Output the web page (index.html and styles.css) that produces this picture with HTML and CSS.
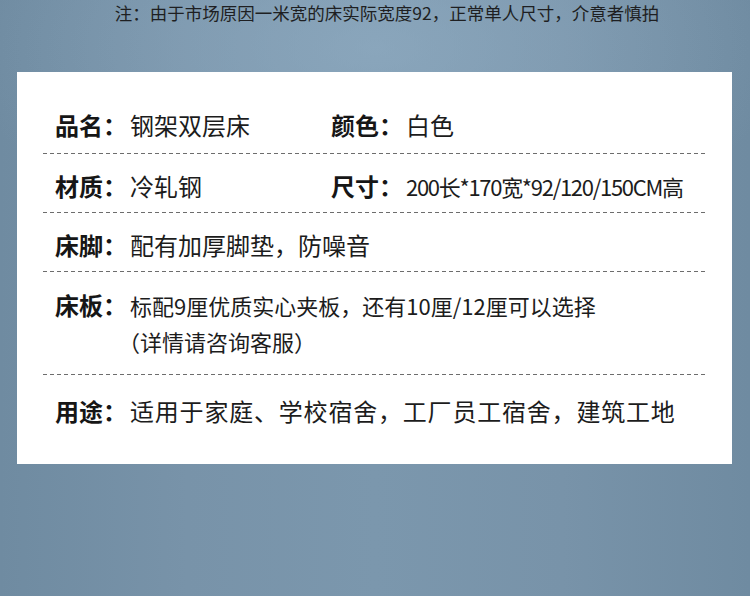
FILE: index.html
```html
<!DOCTYPE html>
<html lang="zh-CN">
  <head>
    <meta charset="UTF-8" />
    <meta name="viewport" content="width=device-width, initial-scale=1.0" />
    <title>钢架双层床 参数</title>
    <link rel="stylesheet" href="styles.css">
  </head>
  <body>
    <div class="page">
      <p class="note">注：由于市场原因一米宽的床实际宽度92，正常单人尺寸，介意者慎拍</p>

      <div class="card">
        <div class="row row-first row-pair">
          <div class="cell">
            <span class="label">品名：</span><span class="value">钢架双层床</span>
          </div>
          <div class="cell">
            <span class="label">颜色：</span><span class="value">白色</span>
          </div>
        </div>

        <div class="row row-pair">
          <div class="cell">
            <span class="label">材质：</span><span class="value">冷轧钢</span>
          </div>
          <div class="cell">
            <span class="label">尺寸：</span><span class="value value-size">200长*170宽*92/120/150CM高</span>
          </div>
        </div>

        <div class="row">
          <div class="cell">
            <span class="label">床脚：</span><span class="value">配有加厚脚垫，防噪音</span>
          </div>
        </div>

        <div class="row row-board">
          <div class="cell">
            <span class="label">床板：</span>
            <span class="value value-small">
              <span class="line">标配9厘优质实心夹板，还有10厘/12厘可以选择</span>
              <span class="line line-pull">（详情请咨询客服）</span>
            </span>
          </div>
        </div>

        <div class="row row-last">
          <div class="cell">
            <span class="label">用途：</span><span class="value value-wide">适用于家庭、学校宿舍，工厂员工宿舍，建筑工地</span>
          </div>
        </div>
      </div>
    </div>
  </body>
</html>
```

FILE: styles.css
```css
* {
  margin: 0;
  padding: 0;
  box-sizing: border-box;
}

body {
  font-family: "Noto Sans CJK SC", "Noto Sans", sans-serif;
  color: #1a1a1a;
  width: 750px;
  height: 596px;
  overflow: hidden;
  background-color: #7893aa;
  background-image:
    radial-gradient(ellipse 55% 35% at 50% 8%, rgba(150, 178, 200, 0.55) 0%, rgba(150, 178, 200, 0) 100%),
    linear-gradient(to right, #6f8ba1 0%, #7893a9 25%, #7b97ad 50%, #7893a9 75%, #6f8ba1 100%);
}

.page {
  height: 596px;
  padding-top: 2px;
}

.note {
  font-size: 17.5px;
  line-height: 22px;
  text-align: center;
  padding-left: 24px;
  color: #1e1f22;
}

.card {
  margin: 48px 18px 0 17px;
  background-color: #fff;
  padding: 23px 24px 32px 26px;
}

.row {
  padding: 14px 0 9px 12px;
  background: repeating-linear-gradient(to right, #6d6d6d 0 4px, transparent 4px 7px) left bottom / 100% 1px no-repeat;
}

.row-first {
  padding-top: 12px;
  padding-bottom: 11px;
}

.row-board {
  padding-top: 15px;
  padding-bottom: 16px;
}

.row-last {
  padding-top: 18px;
  padding-bottom: 3px;
  background: none;
}

.row-pair {
  display: grid;
  grid-template-columns: 276px 1fr;
}

.cell {
  display: flex;
  align-items: flex-start;
  line-height: 36px;
}

.label {
  flex: none;
  font-size: 24px;
  font-weight: 700;
  margin-right: 3px;
  color: #161616;
}

.value {
  font-size: 24px;
  font-weight: 400;
  color: #1c1c1c;
}

.value-size {
  font-size: 22px;
  letter-spacing: -1.3px;
}

.value-small {
  font-size: 22px;
}

.line {
  display: block;
}

.line-pull {
  margin-left: -12px;
}

.value-wide {
  letter-spacing: 0.8px;
}
```
